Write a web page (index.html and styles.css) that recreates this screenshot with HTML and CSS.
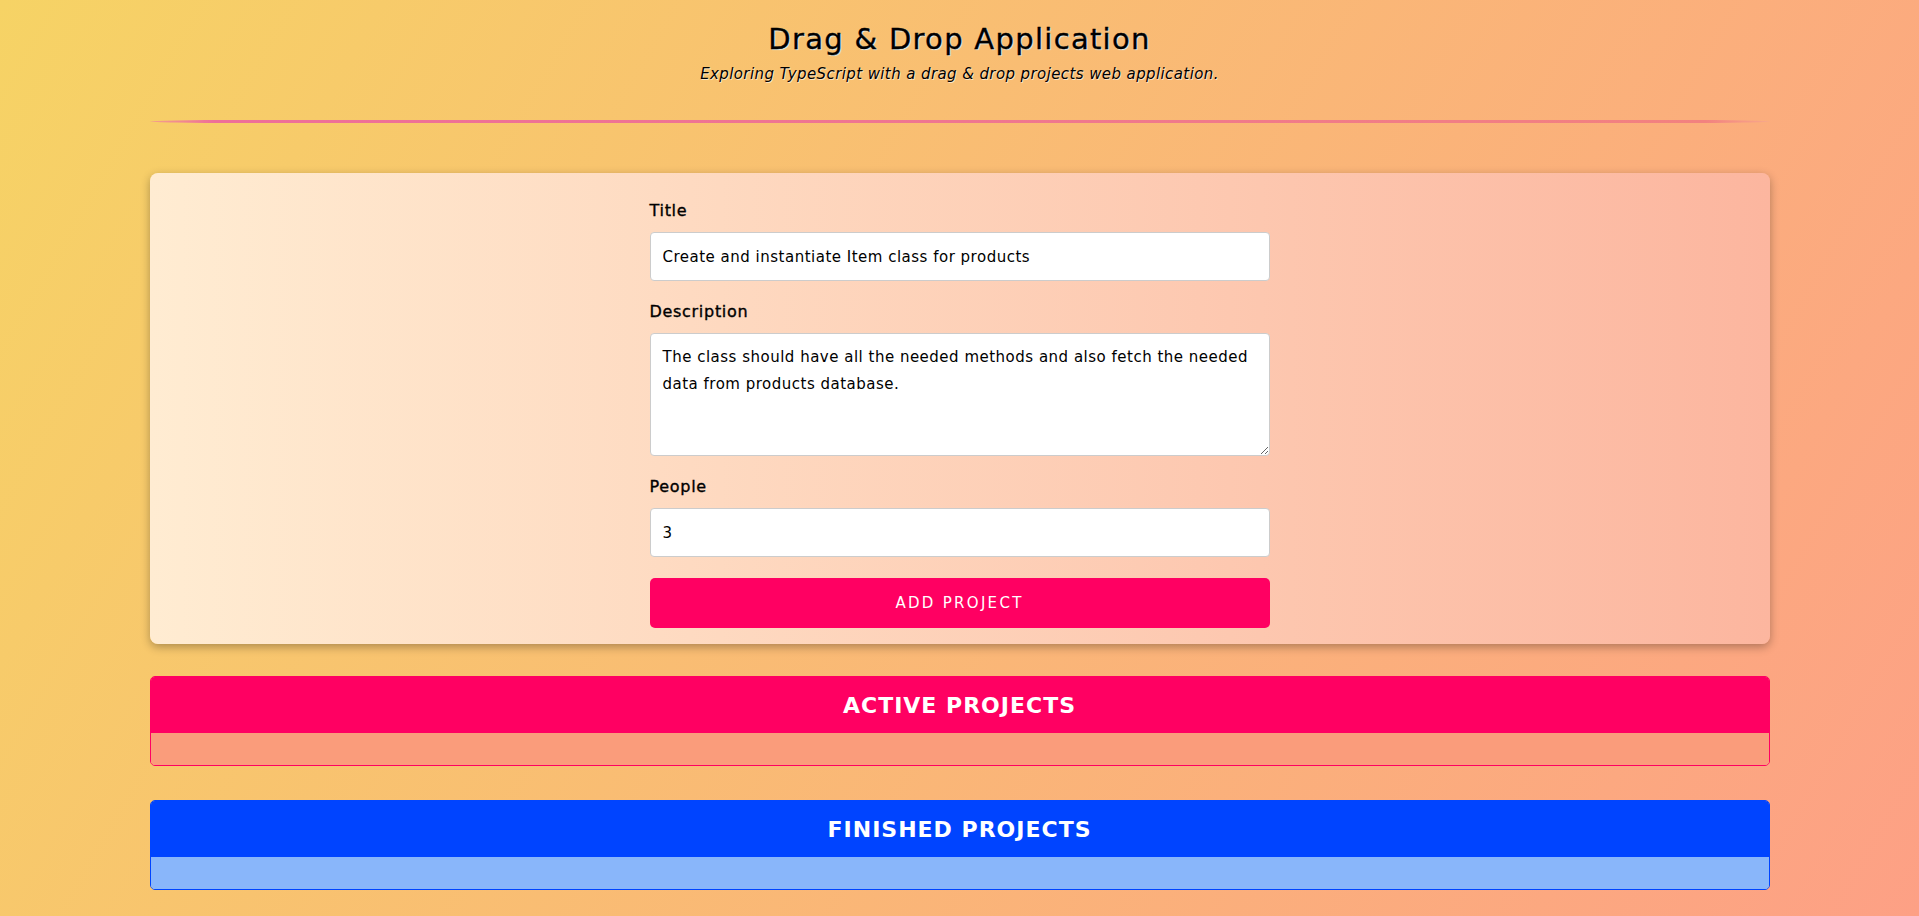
FILE: index.html
```html
<!DOCTYPE html>
<html lang="en">
<head>
<meta charset="UTF-8">
<title>Drag &amp; Drop Application</title>
<link rel="stylesheet" href="styles.css">
</head>
<body>
<header class="page-header">
  <h1 class="page-title">Drag &amp; Drop Application</h1>
  <p class="page-subtitle">Exploring TypeScript with a drag &amp; drop projects web application.</p>
</header>
<hr class="divider">
<main class="content">
  <section class="card">
    <form class="project-form">
      <div class="form-control">
        <label class="form-label" for="title">Title</label>
        <input class="form-input" type="text" id="title" value="Create and instantiate Item class for products">
      </div>
      <div class="form-control">
        <label class="form-label" for="description">Description</label>
        <textarea class="form-input form-textarea" id="description" rows="3">The class should have all the needed methods and also fetch the needed data from products database.</textarea>
      </div>
      <div class="form-control">
        <label class="form-label" for="people">People</label>
        <input class="form-input" type="number" id="people" value="3">
      </div>
      <button class="submit-btn" type="button">Add Project</button>
    </form>
  </section>
  <section class="projects projects-active">
    <header class="projects-header"><h2 class="projects-title">Active Projects</h2></header>
    <ul class="projects-list"></ul>
  </section>
  <section class="projects projects-finished">
    <header class="projects-header"><h2 class="projects-title">Finished Projects</h2></header>
    <ul class="projects-list"></ul>
  </section>
</main>
</body>
</html>
```
FILE: styles.css
```css
* { box-sizing: border-box; }

html, body { height: 100%; }

body {
  margin: 0;
  font-family: "DejaVu Sans", "Open Sans", sans-serif;
  color: #000;
  background: linear-gradient(120deg, #f6d365 0%, #fda085 100%);
  background-attachment: fixed;
  overflow: hidden;
}

.page-header {
  text-align: center;
  padding-top: 21px;
}

.page-title {
  margin: 0;
  font-size: 29px;
  line-height: 36px;
  font-weight: 400;
  letter-spacing: 1.3px;
  -webkit-text-stroke: 0.4px #000;
  text-shadow: 1px 1px 1px rgba(220, 245, 255, 0.9);
}

.page-subtitle {
  margin: 7px 0 0;
  font-size: 15px;
  line-height: 20px;
  font-style: italic;
  letter-spacing: 0.4px;
  text-shadow: 1px 1px 0 rgba(255, 255, 255, 0.6);
}

.divider {
  width: 1620px;
  height: 3px;
  margin: 36px auto 0;
  border: 0;
  border-radius: 90px / 1.5px;
  background: linear-gradient(to right, #f3a08a 0%, #ee6f98 4%, #ef7690 50%, #f2827f 96%, #f7a88a 100%);
}

.content {
  width: 1620px;
  margin: 0 auto;
}

.card {
  margin-top: 50px;
  border-radius: 8px;
  background: linear-gradient(to right, #ffecd2 0%, #fcb69f 100%);
  box-shadow: 0 3px 10px rgba(0, 0, 0, 0.3);
  padding: 26px 0 16px;
}

.project-form {
  width: 620px;
  margin: 0 auto;
  display: flex;
  flex-direction: column;
}

.form-control {
  display: flex;
  flex-direction: column;
  margin-bottom: 19px;
}

.form-label {
  font-size: 16px;
  line-height: 24px;
  font-weight: 400;
  letter-spacing: 0.7px;
  -webkit-text-stroke: 0.35px #000;
  margin-bottom: 9px;
}

.form-input {
  font-family: inherit;
  font-size: 15px;
  letter-spacing: 0.5px;
  color: #000;
  background: #fff;
  border: 1px solid #ccc;
  border-radius: 4px;
  height: 49px;
  padding: 0 12px;
  outline: none;
}

.form-textarea {
  height: 123px;
  padding: 10px 12px;
  line-height: 27px;
  resize: vertical;
}

.submit-btn {
  margin-top: 2px;
  height: 50px;
  border: 0;
  border-radius: 5px;
  background: #ff0062;
  color: #fff;
  font-family: inherit;
  font-size: 15px;
  letter-spacing: 2.3px;
  text-transform: uppercase;
  cursor: pointer;
}

.projects {
  margin-top: 32px;
  border: 1px solid #ff0062;
  border-radius: 5px;
  overflow: hidden;
}

.projects + .projects { margin-top: 34px; }

.projects-header {
  height: 56px;
  display: flex;
  align-items: center;
  justify-content: center;
  background: #ff0062;
}

.projects-title {
  margin: 0;
  color: #fff;
  font-size: 22px;
  font-weight: 700;
  letter-spacing: 1px;
  text-transform: uppercase;
}

.projects-list {
  list-style: none;
  margin: 0;
  padding: 16px;
  background: #fa9c7b;
}

.projects-finished { border-color: #0044ff; }
.projects-finished .projects-header { background: #0044ff; }
.projects-finished .projects-list { background: #89b6fa; }
```
